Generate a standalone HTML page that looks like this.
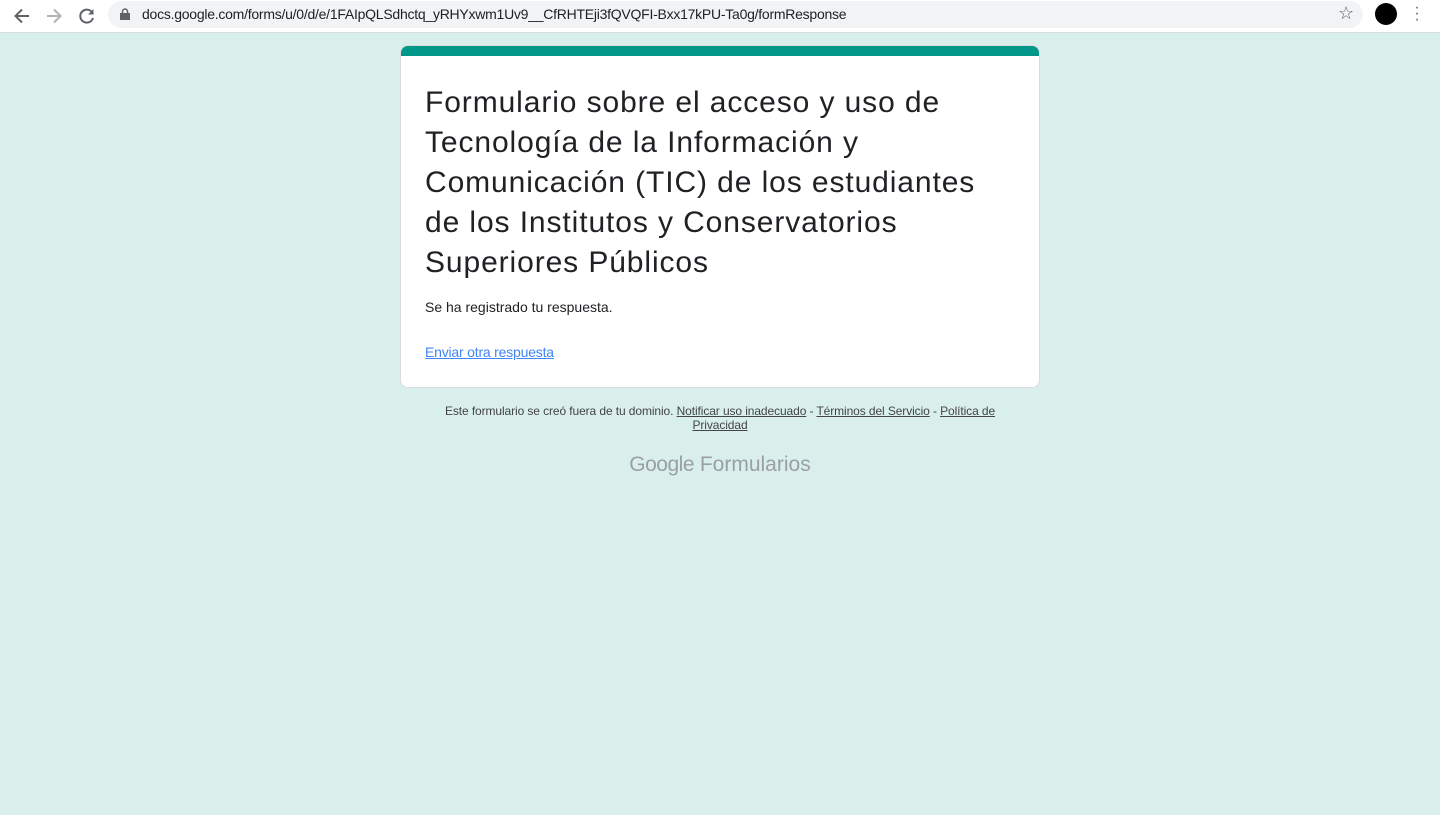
<!DOCTYPE html>
<html><head><meta charset="utf-8"><style>
body{margin:0;width:1440px;height:815px;background:#d9efec;font-family:"Liberation Sans",sans-serif;overflow:hidden;position:relative}
.bar{position:absolute;left:0;top:0;width:1440px;height:32px;background:#fff;border-bottom:1px solid #dadce0}
.url{position:absolute;left:108px;top:1px;width:1255px;height:27px;background:#f1f3f4;border-radius:14px}
.url span{position:absolute;left:34px;top:5px;font-size:14px;color:#202124;white-space:nowrap;letter-spacing:-0.25px}
.card{position:absolute;left:400px;top:45px;width:638px;height:341px;background:#fff;border:1px solid #dadce0;border-radius:8px;overflow:hidden}
.top{height:10px;background:#009688}
h1{margin:0;position:absolute;left:24px;top:37px;font-weight:400;font-size:30px;line-height:40px;color:#202124;white-space:nowrap;letter-spacing:0.9px}
.msg{position:absolute;left:24px;top:253px;font-size:14px;color:#202124}
.lnk{position:absolute;left:24px;top:298px;font-size:14px;color:#4285f4;text-decoration:underline;letter-spacing:-0.2px}
.foot{position:absolute;left:430px;width:580px;top:404px;text-align:center;font-size:12px;line-height:14px;color:#444;letter-spacing:-0.1px}
.logo{position:absolute;left:0;width:1440px;top:453px;text-align:center;font-size:21px;color:#9aa0a6}
</style></head><body>
<div class="bar">
<svg style="position:absolute;left:12px;top:6px" width="20" height="20" viewBox="0 0 20 20"><path d="M17 10H4M10 3.5L3.5 10 10 16.5" stroke="#5f6368" stroke-width="2" fill="none"/></svg>
<svg style="position:absolute;left:44px;top:6px" width="20" height="20" viewBox="0 0 20 20"><path d="M3 10h13M10 3.5L16.5 10 10 16.5" stroke="#b0b3b6" stroke-width="2" fill="none"/></svg>
<svg style="position:absolute;left:77px;top:6px" width="20" height="20" viewBox="0 0 20 20"><path d="M15.5 7A6.5 6.5 0 1 0 16 12" stroke="#5f6368" stroke-width="2" fill="none"/><path d="M16.5 3v5.5H11z" fill="#5f6368"/></svg>
<div class="url"><svg style="position:absolute;left:12px;top:7px" width="10" height="12" viewBox="0 0 10 12"><rect x="0" y="5" width="10" height="7" fill="#5f6368"/><path d="M2.5 5V3.5a2.5 2.5 0 0 1 5 0V5" stroke="#5f6368" stroke-width="1.5" fill="none"/></svg><span>docs.google.com/forms/u/0/d/e/1FAIpQLSdhctq_yRHYxwm1Uv9__CfRHTEji3fQVQFI-Bxx17kPU-Ta0g/formResponse</span>
<span style="left:1230px;top:2px;font-size:18px;color:#5f6368">☆</span></div>
<div style="position:absolute;left:1375px;top:3px;width:22px;height:22px;border-radius:50%;background:#000"></div>
<div style="position:absolute;left:1412px;top:5px;font-size:16px;line-height:6px;color:#5f6368;width:10px;text-align:center">·<br>·<br>·</div>
</div>
<div class="card"><div class="top"></div>
<h1>Formulario sobre el acceso y uso de<br>Tecnología de la Información y<br>Comunicación (TIC) de los estudiantes<br>de los Institutos y Conservatorios<br>Superiores Públicos</h1>
<div class="msg">Se ha registrado tu respuesta.</div>
<div class="lnk">Enviar otra respuesta</div>
</div>
<div class="foot">Este formulario se creó fuera de tu dominio. <u>Notificar uso inadecuado</u> - <u>Términos del Servicio</u> - <u>Política de Privacidad</u></div>
<div class="logo"><span style="letter-spacing:-0.5px">Google</span> Formularios</div>
</body></html>
